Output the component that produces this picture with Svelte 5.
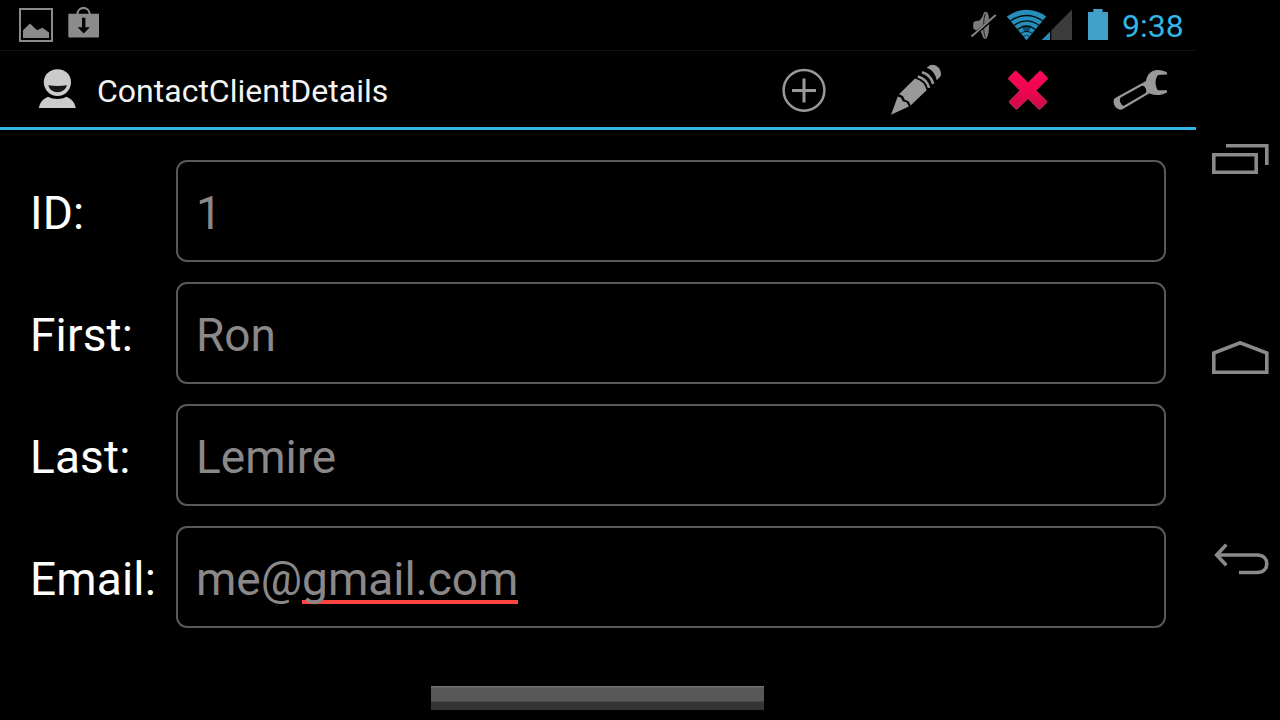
<script>
  const fields = [
    { label: 'ID:', value: '1' },
    { label: 'First:', value: 'Ron' },
    { label: 'Last:', value: 'Lemire' },
    { label: 'Email:', value: 'me@', flagged: 'gmail.com' }
  ];
</script>

<div class="screen">
  <div class="app">
    <header class="status">
      <svg class="picture" width="34" height="34" viewBox="19 8 34 34" fill="#8b8b8b">
        <path fill="none" stroke="#8b8b8b" stroke-width="2" d="M20 9H52V41H20Z" />
        <path d="M23 38V30.3L30 23.5L37 30.3L42.5 27.8L49 32.5V38Z" />
      </svg>
      <svg class="bag" width="32" height="32" viewBox="68 7 32 32">
        <path fill="none" stroke="#8b8b8b" stroke-width="2" d="M77.3 15C77.3 5.5 89.7 5.5 89.7 15" />
        <path fill="#8b8b8b" fill-rule="evenodd" d="M68.3 13.8H99V36.5Q99 37.6 98 37.6H69.5Q68.3 37.6 68.3 36.5ZM82 17.8V27.3H77.6L83.7 33.4L89.8 27.3H85.4V17.8Z" />
      </svg>
      <span class="spacer"></span>
      <svg class="mute" width="28" height="32" viewBox="970 10 28 32">
        <path fill="#7c7c7c" d="M973.2 24Q973.2 21.5 976 21L979.5 20.5Q983 17 984 12.2Q987.5 10.5 988.7 16Q989.7 21 989 28Q988.5 38 985.4 39Q982.8 39 982 34Q980.5 30.5 978.3 30L975.5 30Q973.2 29.7 973.2 27.5Z" />
        <path fill="none" stroke="#202020" stroke-width="1" d="M985.4 13.5C983 19 983 33 985.4 37.5" />
        <path stroke="#000" stroke-width="3.6" d="M971 37.5L997 15" />
        <path stroke="#858585" stroke-width="2" d="M971.5 36.5L995.7 15" />
      </svg>
      <svg class="wifi" width="66" height="32" viewBox="1006 9 66 32">
        <defs>
          <clipPath id="fan"><path d="M1026.5 40.3L1006.8 16.5Q1016 9.8 1026.5 9.8T1046.2 16.5Z" /></clipPath>
        </defs>
        <g clip-path="url(#fan)">
          <path fill="#258eb9" d="M1006 9H1048V41H1006Z" />
          <path fill="#0e5069" d="M1021.5 25.5L1031.5 25.5L1028.5 32H1024.5Z" />
          <g fill="none" stroke="#02090c" stroke-width="1.3">
            <path d="M1010 21Q1026.5 10 1043 21" />
            <path d="M1013 26Q1026.5 15.8 1040 26" />
            <path d="M1017 29.8Q1026.5 22.3 1036 29.8" />
            <path stroke-width=".8" d="M1020 33.8Q1026.5 29 1033 33.8" />
            <path stroke-width=".6" d="M1023 36.5Q1026.5 34 1030 36.5" />
          </g>
        </g>
        <path fill="#3b3b3b" d="M1051.3 30.2L1072 9.5V40H1051.3Z" />
        <path fill="#258eb9" d="M1041.7 40L1050 31.7V40Z" />
      </svg>
      <svg class="battery" width="20" height="31" viewBox="0 0 20 31" fill="#429fc7">
        <path d="M0 3H5.3V0H14.6V3H20V31H0Z" />
      </svg>
      <span class="clock">9:38</span>
    </header>

    <nav class="actions">
      <svg class="person" width="38" height="40" viewBox="38 69 38 40">
        <g fill="#cbcbcb">
          <path d="M57.5 69.3C65.5 69.3 71 75 71 82C71 90 65 96 57.5 96S43.8 90 43.8 82C43.8 75 49.5 69.3 57.5 69.3Z" />
          <path d="M38.8 108Q40 100 48 96.8C53.5 99.8 61 99.8 66.5 96.8Q74.5 100 75.8 108Z" />
        </g>
        <path fill="#161616" d="M48.3 85.3Q57.5 86.5 67 85.3Q65 92.2 57.5 92.2T48.3 85.3Z" />
      </svg>
      <h1>ContactClientDetails</h1>
      <span class="spacer"></span>
      <svg class="add" width="44" height="44" viewBox="782 68 44 44" fill="none" stroke="#999">
        <circle cx="804" cy="90.3" r="20.4" stroke-width="2.5" />
        <path stroke-width="3" d="M792 90.4H816M804 78.4V102.4" />
      </svg>
      <svg class="pencil" width="52" height="52" viewBox="890 64 52 52">
        <g fill="#999">
          <path d="M891 114.8L897.7 96.5L901 97.8L902.8 101.3L906.8 102.5L908.9 106.4Z" />
          <path d="M899 94.2L915 78.6Q924.5 81 926.6 90.2L910.6 105.6L908.8 101.5L904.8 99.8L902.9 96Z" />
          <path d="M926.7 67.7L930 65.2Q935 63.5 939 68Q942.5 73.5 940 77L936.7 80.3Q935 70.5 926.7 67.7Z" />
        </g>
        <path fill="none" stroke="#999" stroke-width="2.6" d="M917.8 76.4Q926.8 79 929.1 87.9M922 72.2Q930.8 74.6 933.2 83.8" />
      </svg>
      <svg class="remove" width="40" height="40" viewBox="1008 70 40 40">
        <defs>
          <linearGradient id="red" x1="0" y1="0" x2="0" y2="1">
            <stop offset="0" stop-color="#ff0658" /><stop offset=".5" stop-color="#ee0550" /><stop offset="1" stop-color="#c90b45" />
          </linearGradient>
          <linearGradient id="edge" x1="0" y1="0" x2="0" y2="1">
            <stop offset="0" stop-color="#d81651" /><stop offset="1" stop-color="#dc4573" />
          </linearGradient>
        </defs>
        <path fill="url(#red)" stroke="url(#edge)" stroke-width=".8" stroke-linejoin="round" d="M1015 71.2L1016.5 71.2L1028 82.8L1039.7 71.2L1041 71.2L1047.3 77.8V79.2L1036 90.5L1046.7 101.2V102.5L1040.2 109H1038.7L1028 98.5L1017 109H1015.7L1009.5 102.5V101.2L1020 90.5L1008.7 79.2V77.8Z" />
      </svg>
      <svg class="wrench" width="56" height="42" viewBox="1112 69 56 42">
        <path fill="#999" fill-rule="evenodd" d="M1114.7 98.2L1146 81C1147 74 1151.5 70 1157.5 70C1161 70 1165 71 1167 72.5V74.5L1158 75C1155 79 1154.7 85 1157.8 90.3H1167V92.4C1164 94.2 1159 95.2 1156.5 95C1153 94.8 1151 94.2 1149.5 93.2L1122.5 109.3Q1117.5 110.8 1114.5 105.5Q1112.5 101 1114.7 98.2ZM1121.2 97.3Q1119 98.7 1120.3 102.2Q1122.2 106.7 1124.3 105.5L1145.3 93.2Q1147 92 1146 89Q1144.2 85 1141.5 86Z" />
      </svg>
    </nav>

    <main>
      <form class="details">
        {#each fields as field}
          <div class="row">
            <span class="label">{field.label}</span>
            <div class="field"><span class="value">{field.value}{#if field.flagged}<span class="flagged">{field.flagged}</span>{/if}</span></div>
          </div>
        {/each}
      </form>
      <div class="handle"></div>
    </main>
  </div>

  <aside class="system">
    <svg class="recent" width="58" height="32" viewBox="1211 143 58 32" fill="none" stroke="#8a8a8a" stroke-width="3.6">
      <path d="M1213.8 154.8H1256.2V172.2H1213.8Z" />
      <path d="M1226 145.8H1266.8V165" />
    </svg>
    <svg class="home" width="58" height="34" viewBox="1211 341 58 34" fill="none" stroke="#8a8a8a" stroke-width="3.6">
      <path d="M1213.8 372.2V353L1240.2 342.8L1266.8 353V372.2Z" />
    </svg>
    <svg class="back" width="58" height="34" viewBox="1211 543 58 34" fill="none" stroke="#8a8a8a" stroke-width="3.6">
      <path d="M1217 554.7H1257C1263.8 554.7 1266.8 559 1266.8 563.5S1263.8 572.2 1257 572.2H1239" transform="translate(0 .3)" />
      <path d="M1226.3 544.3L1216.7 554.7L1226.3 565" transform="translate(0 .3)" />
    </svg>
  </aside>
</div>

<style>
  :global(body) { background: #000; overflow: hidden; }
  * { box-sizing: border-box; }
  svg { display: block; flex: none; }
  .screen { display: flex; width: 1280px; height: 720px; background: #000; color: #fff; font-family: Roboto, sans-serif; }
  .app { display: flex; flex-direction: column; width: 1196px; }
  .spacer { flex: 1; }

  .status { display: flex; align-items: flex-start; height: 51px; padding: 0 12px 0 19px; border-bottom: 1px solid #121212; }
  .picture { margin-top: 8px; }
  .bag { margin: 7px 0 0 15px; }
  .mute { margin-top: 10px; }
  .wifi { margin: 9px 0 0 8px; }
  .battery { margin: 9px 0 0 16px; }
  .clock { width: 62px; margin: 7px 0 0 14px; color: #33b5e5; font-size: 32px; line-height: 38px; white-space: nowrap; }

  .actions { display: flex; align-items: flex-start; height: 79px; padding: 0 28px 0 38px; border-bottom: 3px solid #33b5e5; }
  .person { margin-top: 18px; }
  h1 { margin: 21px 0 0 21px; font-size: 32px; line-height: 38px; font-weight: 400; color: #f3f3f3; }
  .add { margin-top: 17px; }
  .pencil { margin: 13px 0 0 64px; }
  .remove { margin: 19px 0 0 66px; }
  .wrench { margin: 18px 0 0 64px; }

  main { display: flex; flex-direction: column; align-items: center; justify-content: space-between; flex: 1; padding: 30px 30px 10px; }
  .details { display: flex; flex-direction: column; gap: 20px; width: 100%; }
  .row { display: grid; grid-template-columns: 146px 1fr; grid-template-rows: 102px; font-size: 46px; line-height: 54px; }
  .label { padding-top: 26px; letter-spacing: .15px; white-space: nowrap; }
  .field { padding: 24px 18px 0; border: 2px solid #585858; border-radius: 11px; color: #8a8888; white-space: nowrap; }
  .flagged { background: linear-gradient(#ff4444, #ff4444) 0 48px / 100% 4px no-repeat; }
  .handle { width: 333px; height: 24px; margin-right: 1px; background: linear-gradient(#727272 1px, #606060 1px 2px, #585858 2px 15px, #494949 15px 16px, #343434 16px); }

  .system { display: flex; flex-direction: column; width: 84px; padding: 143px 0 0 15px; }
  .home { margin-top: 166px; }
  .back { margin-top: 168px; }
</style>
